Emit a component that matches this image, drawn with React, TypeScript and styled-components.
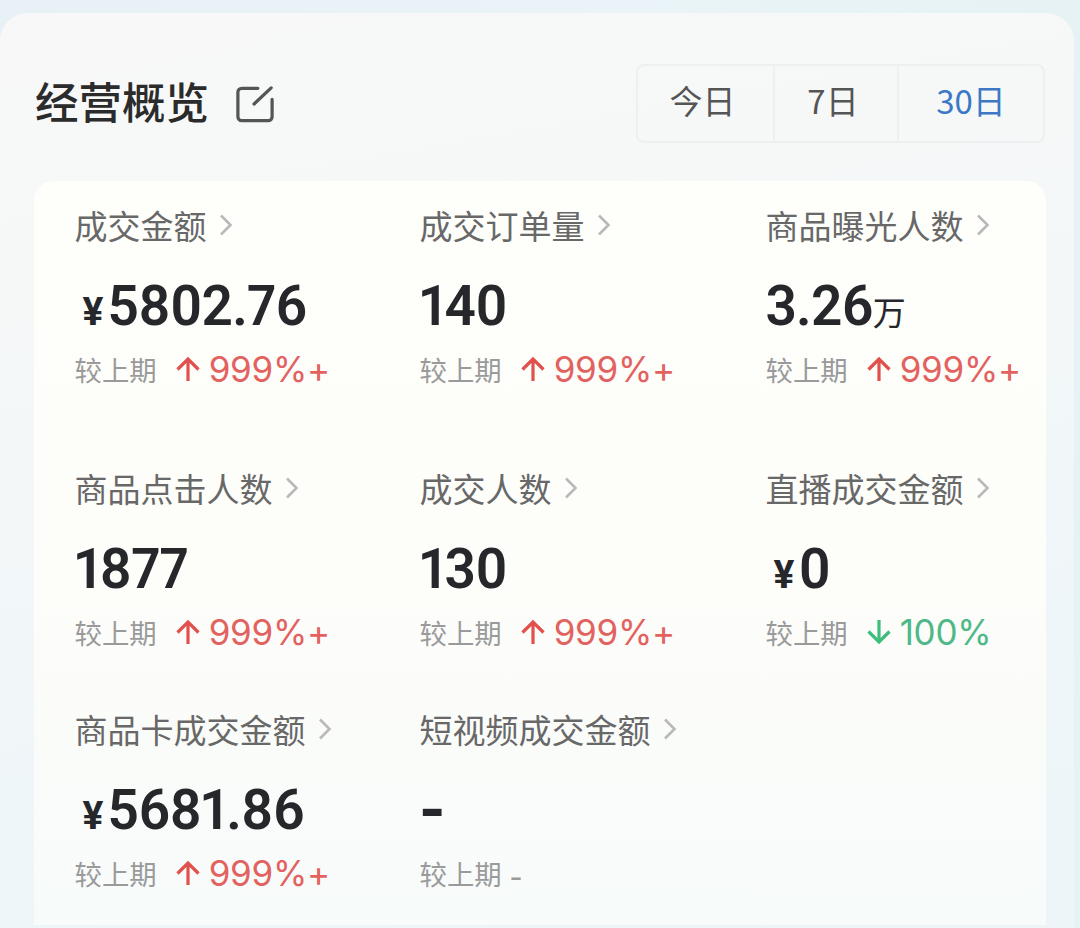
import styled, { createGlobalStyle } from "styled-components";

const GlobalStyle = createGlobalStyle`
  html, body {
    margin: 0;
    padding: 0;
    height: 928px;
    overflow: hidden;
    background: #e9f3f7;
  }
  * { box-sizing: border-box; }
`;

const CJK = `"Noto Sans CJK SC", "Noto Sans", sans-serif`;
const NUM = `Roboto, "Noto Sans CJK SC", sans-serif`;
const DELTA = `Inter, "Liberation Sans", sans-serif`;

const Page = styled.div`
  width: 1080px;
  height: 928px;
  padding-top: 13px;
  overflow: hidden;
  background: linear-gradient(90deg, #e8f2f6, #eaf4f8 60%, #e6f2f4);
`;
const Panel = styled.div`
  width: 1074px;
  height: 915px;
  padding: 51px 26px 0 34px;
  border-radius: 28px 28px 0 0;
  background: linear-gradient(170deg, #f8f8f8 0%, #f6f8f8 25%, #eff6f9 70%, #eef5f9 100%);
`;
const Header = styled.div`
  display: flex;
  align-items: center;
  justify-content: space-between;
  height: 79px;
  margin-bottom: 38px;
  padding-right: 3px;
`;
const TitleWrap = styled.div`
  display: flex;
  align-items: center;
  gap: 27px;
  padding: 0 0 0 1px;
`;
const Title = styled.h1`
  margin: -5px 0 0;
  font: 500 43.5px/60px ${CJK};
  color: #2b2b2b;
`;
const Segments = styled.div`
  display: flex;
  width: 409px;
  height: 79px;
  border: 2px solid #eeeff0;
  border-radius: 8px;
`;
const Segment = styled.div<{ $width: number; $active?: boolean }>`
  display: flex;
  align-items: center;
  justify-content: center;
  width: ${(p) => p.$width}px;
  padding: 0 ${(p) => (p.$active ? 0 : 6)}px 6px 0;
  border-right: 2px solid #eeeff0;
  font: 400 33px/1 ${CJK};
  color: ${(p) => (p.$active ? "#3d78c6" : "#555555")};
  &:last-child { border-right: 0; }
`;
const Card = styled.div`
  display: grid;
  grid-template-columns: 345px 346px 1fr;
  grid-template-rows: 263px 241px 1fr;
  width: 1012px;
  height: 744px;
  padding: 17px 0 0 40.5px;
  border-radius: 20px 20px 0 0;
  background: linear-gradient(180deg, #fefefb 0%, #fdfdfa 55%, #f7fbfa 100%);
`;
const Metric = styled.div`
  display: flex;
  flex-direction: column;
`;
const Label = styled.div`
  display: flex;
  align-items: center;
  gap: 12px;
  height: 54px;
  font: 400 33px/54px ${CJK};
  color: #686868;
  white-space: nowrap;
`;
const Value = styled.div`
  display: flex;
  align-items: baseline;
  height: 78px;
  margin-top: 15px;
  font: 600 55px/78px ${NUM};
  font-variant-numeric: proportional-nums;
  letter-spacing: -0.8px;
  color: #25272b;
`;
const Currency = styled.span`
  margin: 0 5px 0 8px;
  font: 700 39px/1 ${NUM};
`;
const Unit = styled.span`
  font: 400 33px/1 ${CJK};
`;
const EmptyValue = styled.span`
  font-size: 70px;
  line-height: 78px;
`;
const Delta = styled.div`
  display: flex;
  align-items: center;
  height: 48px;
  margin-top: 0;
`;
const DeltaLabel = styled.span`
  margin-right: 18px;
  font: 400 27.4px/48px ${CJK};
  color: #9a9a9a;
`;
const DeltaValue = styled.span<{ $tone: "up" | "down" }>`
  margin-left: 8px;
  font: 400 35px/48px ${DELTA};
  letter-spacing: -0.3px;
  color: ${(p) => (p.$tone === "up" ? "#e2625f" : "#4fb888")};
`;
const Dash = styled.span`
  margin-left: -10px;
  font: 400 36px/48px ${CJK};
  color: #9a9a9a;
`;

const EditIcon = () => (
  <svg width="38" height="38" viewBox="0 0 40 40" fill="none" stroke="#555" strokeWidth="3.4" strokeLinecap="round">
    <path d="M23 3.5H6a4 4 0 0 0-4 4v26a4 4 0 0 0 4 4h28a4 4 0 0 0 4-4V15" />
    <path d="M19 20L37 3" />
  </svg>
);

const Chevron = () => (
  <svg width="14" height="24" viewBox="0 0 14 24" fill="none" stroke="#b9b9b9" strokeWidth="2.6">
    <path d="M2 2.5L11.5 12L2 21.5" />
  </svg>
);

const Arrow = ({ tone }: { tone: "up" | "down" }) => (
  <svg width="26" height="26" viewBox="0 0 26 26" fill="none" stroke={tone === "up" ? "#e2504d" : "#3ebd7d"} strokeWidth="3.2">
    {tone === "up" ? (
      <path d="M13 25V3M2.5 13.5L13 3l10.5 10.5" />
    ) : (
      <path d="M13 1v22M2.5 12.5L13 23l10.5-10.5" />
    )}
  </svg>
);

type Item = {
  label: string;
  value: string;
  currency?: boolean;
  unit?: string;
  delta?: string;
  tone?: "up" | "down";
};

const items: Item[] = [
  { label: "成交金额", value: "5802.76", currency: true, delta: "999%+", tone: "up" },
  { label: "成交订单量", value: "140", delta: "999%+", tone: "up" },
  { label: "商品曝光人数", value: "3.26", unit: "万", delta: "999%+", tone: "up" },
  { label: "商品点击人数", value: "1877", delta: "999%+", tone: "up" },
  { label: "成交人数", value: "130", delta: "999%+", tone: "up" },
  { label: "直播成交金额", value: "0", currency: true, delta: "100%", tone: "down" },
  { label: "商品卡成交金额", value: "5681.86", currency: true, delta: "999%+", tone: "up" },
  { label: "短视频成交金额", value: "-" },
];

export default function App() {
  return (
    <>
      <GlobalStyle />
      <Page>
        <Panel>
          <Header>
            <TitleWrap>
              <Title>经营概览</Title>
              <EditIcon />
            </TitleWrap>
            <Segments>
              <Segment $width={137}>今日</Segment>
              <Segment $width={124}>7日</Segment>
              <Segment $width={144} $active>30日</Segment>
            </Segments>
          </Header>
          <Card>
            {items.map((item) => (
              <Metric key={item.label}>
                <Label>
                  {item.label}
                  <Chevron />
                </Label>
                <Value>
                  {item.currency && <Currency>¥</Currency>}
                  {item.value === "-" ? <EmptyValue>-</EmptyValue> : item.value}
                  {item.unit && <Unit>{item.unit}</Unit>}
                </Value>
                <Delta>
                  <DeltaLabel>较上期</DeltaLabel>
                  {item.tone ? (
                    <>
                      <Arrow tone={item.tone} />
                      <DeltaValue $tone={item.tone}>{item.delta}</DeltaValue>
                    </>
                  ) : (
                    <Dash>-</Dash>
                  )}
                </Delta>
              </Metric>
            ))}
          </Card>
        </Panel>
      </Page>
    </>
  );
}
